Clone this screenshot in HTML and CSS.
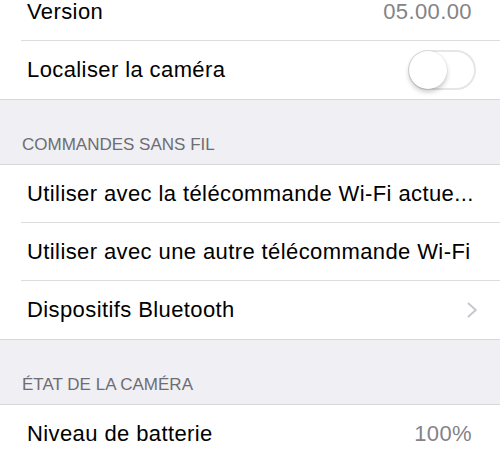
FILE: index.html
```html
<!DOCTYPE html>
<html lang="fr">
<head>
<meta charset="utf-8">
<title>Réglages caméra</title>
<link rel="stylesheet" href="styles.css">
</head>
<body>
<div class="page">
  <section class="group group-first">
    <div class="row">
      <span class="label">Version</span>
      <span class="value">05.00.00</span>
    </div>
    <div class="row">
      <span class="label">Localiser la caméra</span>
      <span class="switch"><span class="knob"></span></span>
    </div>
  </section>

  <header class="section-header">COMMANDES SANS FIL</header>
  <section class="group">
    <div class="row">
      <span class="label">Utiliser avec la télécommande Wi-Fi actue...</span>
    </div>
    <div class="row">
      <span class="label">Utiliser avec une autre télécommande Wi-Fi</span>
    </div>
    <div class="row row-nav">
      <span class="label">Dispositifs Bluetooth</span>
      <svg class="chevron" width="11" height="16" viewBox="0 0 11 16" aria-hidden="true">
        <path d="M1.5 1.5 L8.8 8 L1.5 14.5" fill="none" stroke="#c7c7cc" stroke-width="2" stroke-linecap="round" stroke-linejoin="round"/>
      </svg>
    </div>
  </section>

  <header class="section-header">ÉTAT DE LA CAMÉRA</header>
  <section class="group">
    <div class="row">
      <span class="label">Niveau de batterie</span>
      <span class="value">100%</span>
    </div>
  </section>
</div>
</body>
</html>
```

FILE: styles.css
```css
html, body {
  margin: 0;
  padding: 0;
  background: #efeff4;
  overflow: hidden;
}

.page {
  font-family: "Liberation Sans", Arial, sans-serif;
  -webkit-font-smoothing: antialiased;
}

.group {
  background: #ffffff;
  border-top: 1px solid #d8d8dc;
  border-bottom: 1px solid #d8d8dc;
}

.group-first {
  margin-top: -18px;
}

.row {
  display: flex;
  align-items: center;
  justify-content: space-between;
  height: 57px;
  margin-left: 21px;
  padding-left: 6px;
  padding-right: 28px;
  border-bottom: 1px solid #dcdce0;
}

.row:last-child {
  border-bottom: none;
  height: 58px;
}

.label {
  font-size: 22px;
  letter-spacing: 0.4px;
  color: #000000;
  white-space: nowrap;
}

.value {
  font-size: 22px;
  letter-spacing: 0.4px;
  color: #838388;
  white-space: nowrap;
}

.row-nav {
  padding-right: 22px;
}

.chevron {
  display: block;
}

.section-header {
  height: 64px;
  box-sizing: border-box;
  display: flex;
  align-items: flex-end;
  padding: 0 0 9px 22px;
  font-size: 17px;
  line-height: 20px;
  color: #6d6d72;
}

.switch {
  position: relative;
  width: 68px;
  height: 40px;
  box-sizing: border-box;
  border: 2px solid #e5e5ea;
  border-radius: 20px;
  background: #ffffff;
  margin-right: -4px;
}

.knob {
  position: absolute;
  left: -1px;
  top: -1px;
  width: 38px;
  height: 38px;
  border-radius: 50%;
  background: #ffffff;
  box-shadow: 0 3px 5px rgba(0, 0, 0, 0.22), 0 0 0 0.5px rgba(0, 0, 0, 0.08);
}
```
